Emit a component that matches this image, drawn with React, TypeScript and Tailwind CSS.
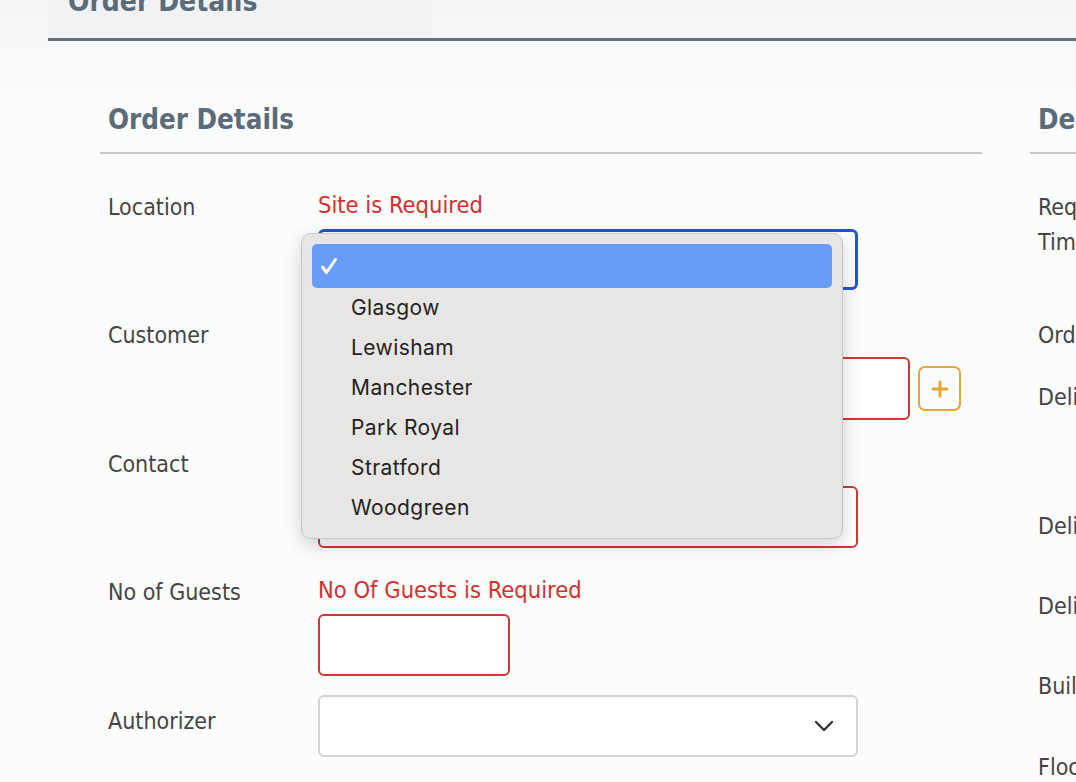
import React from "react";

const LOCATIONS = ["Glasgow", "Lewisham", "Manchester", "Park Royal", "Stratford", "Woodgreen"];

const font = { fontFamily: '"DejaVu Sans Condensed", "DejaVu Sans", Tahoma, sans-serif' };

function ErrorText({ children }: { children: React.ReactNode }) {
  return <div className="h-6 text-[23.5px] leading-6 text-[#d0322d]">{children}</div>;
}

function LocationMenu() {
  return (
    <div
      className="absolute left-[-17px] top-[4px] z-10 w-[542px] rounded-[10px] border border-[#c9c7c5] bg-[#e8e6e4] px-[10px] pb-[10px] pt-[10px] shadow-[0_6px_18px_rgba(0,0,0,0.18)]"
      style={{ fontFamily: 'Inter, "Noto Sans", sans-serif' }}
    >
      <div className="flex h-[44px] items-center rounded-[5px] bg-[#699cf5] pl-[8px]">
        <svg width="18" height="18" viewBox="0 0 18 18" fill="none">
          <path d="M2.5 10 L6.5 15.5 L15.5 2.5" stroke="white" strokeWidth="3" strokeLinecap="round" strokeLinejoin="round" />
        </svg>
      </div>
      {LOCATIONS.map((loc) => (
        <div key={loc} className="flex h-[40px] items-center pl-[39px] text-[21px] tracking-[0.02em] text-[#222]">
          {loc}
        </div>
      ))}
    </div>
  );
}

function Row({ label, children, className = "", labelClass = "" }: { label: string; children: React.ReactNode; className?: string; labelClass?: string }) {
  return (
    <div className={`flex ${className}`}>
      <div className={`w-[218px] shrink-0 pl-2 text-[23px] leading-7 text-[#444] ${labelClass}`}>{label}</div>
      <div className="flex-1">{children}</div>
    </div>
  );
}

export default function App() {
  return (
    <div
      className="h-[782px] w-[1076px] overflow-hidden bg-[linear-gradient(180deg,#f4f5f7_0px,#fbfcfc_120px,#fcfcfc_100%)]"
      style={font}
    >
      {/* Tab strip */}
      <div className="ml-[48px]">
        <div className="h-[38px] w-[384px] overflow-hidden bg-[#f1f2f4] pl-[20px]">
          <div className="-mt-[12px] text-[28px] font-bold leading-[28px] text-[#5b6b79]">Order Details</div>
        </div>
        <div className="h-[3px] bg-[#5f6f7b]" />
      </div>

      <div className="ml-[100px] mt-[61px] flex gap-[48px]">
        {/* Left column */}
        <div className="w-[882px] shrink-0">
          <div className="border-b-2 border-[#c8c8c8] pb-[16px] pl-2 text-[27.5px] font-bold leading-[34px] text-[#5b6b79]">
            Order Details
          </div>

          <Row label="Location" className="mt-[39px]">
            <ErrorText>Site is Required</ErrorText>
            <div className="relative mt-3 w-[540px]">
              <div className="h-[61px] rounded-[6px] border-[3px] border-[#2456c4] bg-white" />
              <LocationMenu />
            </div>
          </Row>

          <Row label="Customer" className="mt-[31px]">
            <ErrorText>Customer is Required</ErrorText>
            <div className="mt-3 flex items-center gap-[8px]">
              <div className="h-[63px] w-[592px] rounded-[6px] border-2 border-[#cc3a34] bg-white" />
              <div className="flex h-[45px] w-[43px] items-center justify-center rounded-[7px] border-2 border-[#e6a43b]">
                <svg width="18" height="18" viewBox="0 0 18 18">
                  <path d="M9 2 V16 M2 9 H16" stroke="#e6a43b" strokeWidth="3" strokeLinecap="round" />
                </svg>
              </div>
            </div>
          </Row>

          <Row label="Contact" className="mt-[30px]">
            <ErrorText>Contact is Required</ErrorText>
            <div className="mt-3 h-[62px] w-[540px] rounded-[6px] border-2 border-[#cc3a34] bg-white" />
          </Row>

          <Row label="No of Guests" className="mt-[30px]">
            <ErrorText>No Of Guests is Required</ErrorText>
            <div className="mt-3 h-[62px] w-[192px] rounded-[6px] border-2 border-[#cc3a34] bg-white" />
          </Row>

          <Row label="Authorizer" className="mt-[19px]" labelClass="pt-[12px]">
            <div className="flex h-[62px] w-[540px] items-center justify-end rounded-[6px] border-2 border-[#d0d4d8] bg-white pr-[22px]">
              <svg width="20" height="12" viewBox="0 0 20 12" fill="none">
                <path d="M2 2 L10 10 L18 2" stroke="#333" strokeWidth="2.4" strokeLinecap="round" strokeLinejoin="round" />
              </svg>
            </div>
          </Row>
        </div>

        {/* Right column */}
        <div className="w-[400px] shrink-0">
          <div className="border-b-2 border-[#c8c8c8] pb-[16px] pl-2 text-[27.5px] font-bold leading-[34px] text-[#5b6b79]">
            Delivery Details
          </div>
          <div className="pl-2 text-[23px] text-[#444]">
            <div className="mt-[36px] w-[110px] leading-[35px]">Requested Time</div>
            <div className="mt-[63px] leading-6">Order Type</div>
            <div className="mt-[38px] leading-6">Delivery Address</div>
            <div className="mt-[105px] leading-6">Delivery Postcode</div>
            <div className="mt-[56px] leading-6">Delivery Contact</div>
            <div className="mt-[56px] leading-6">Building</div>
            <div className="mt-[57px] leading-6">Floor</div>
          </div>
        </div>
      </div>
    </div>
  );
}
